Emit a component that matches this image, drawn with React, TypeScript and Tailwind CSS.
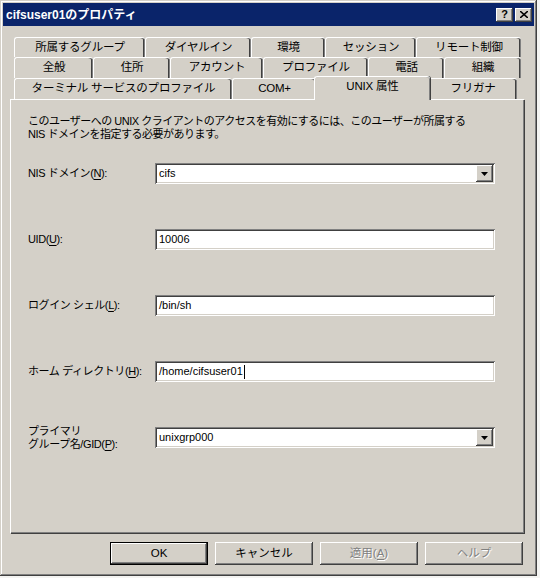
import type { ReactNode } from 'react';

const raised =
  'shadow-[inset_-1px_-1px_#404040,inset_1px_1px_#ffffff,inset_-2px_-2px_#808080,inset_2px_2px_#d4d0c8]';
const sunken =
  'shadow-[inset_1px_1px_#808080,inset_-1px_-1px_#ffffff,inset_2px_2px_#404040,inset_-2px_-2px_#d4d0c8]';

type Tab = { label: string; w: string; selected?: boolean };

const rows: Tab[][] = [
  [
    { label: '所属するグループ', w: 'w-[131px]' },
    { label: 'ダイヤルイン', w: 'w-[106px]' },
    { label: '環境', w: 'w-[74px]' },
    { label: 'セッション', w: 'w-[91px]' },
    { label: 'リモート制御', w: 'w-[105px]' },
  ],
  [
    { label: '全般', w: 'w-[79px]' },
    { label: '住所', w: 'w-[77px]' },
    { label: 'アカウント', w: 'w-[93px]' },
    { label: 'プロファイル', w: 'w-[105px]' },
    { label: '電話', w: 'w-[76px]' },
    { label: '組織', w: 'w-[77px]' },
  ],
  [
    { label: 'ターミナル サービスのプロファイル', w: 'w-[218px]' },
    { label: 'COM+', w: 'w-[84px]' },
    { label: 'UNIX 属性', w: 'w-[116px]', selected: true },
    { label: 'フリガナ', w: 'w-[89px]' },
  ],
];

function TabItem({ tab }: { tab: Tab }) {
  if (tab.selected) {
    return (
      <div
        className={`${tab.w} relative z-10 -mx-[2px] -mt-[2px] -mb-[1px] h-[24px] shrink-0 rounded-t-[3px] border-l border-t border-white bg-[#d4d0c8] shadow-[inset_-1px_0_#808080,1px_0_#404040] flex items-center justify-center pb-[3px]`}
      >
        {tab.label}
      </div>
    );
  }
  return (
    <div
      className={`${tab.w} h-full shrink-0 rounded-t-[3px] border-l border-t border-white bg-[#d4d0c8] shadow-[inset_-1px_0_#808080,inset_-2px_0_#404040] flex items-center justify-center`}
    >
      {tab.label}
    </div>
  );
}

function Key({ children }: { children: ReactNode }) {
  return <span className="underline underline-offset-[2px]">{children}</span>;
}

function Combo({ value }: { value: string }) {
  return (
    <div className={`w-[340px] h-[21px] bg-white ${sunken} flex items-center pl-[4px] pr-[2px]`}>
      <span className="flex-1">{value}</span>
      <div className={`w-[17px] h-[17px] bg-[#d4d0c8] ${raised} flex items-center justify-center`}>
        <svg width="7" height="4" viewBox="0 0 7 4">
          <path d="M0 0h7L3.5 4z" fill="#000" />
        </svg>
      </div>
    </div>
  );
}

function TextBox({ value, caret }: { value: string; caret?: boolean }) {
  return (
    <div className={`w-[340px] h-[21px] bg-white ${sunken} flex items-center pl-[4px]`}>
      <span>{value}</span>
      {caret && <span className="ml-px w-px h-[14px] bg-black" />}
    </div>
  );
}

function Row({ label, children }: { label: ReactNode; children: ReactNode }) {
  return (
    <div className="flex items-center h-[21px]">
      <div className="w-[127px] leading-[13px] whitespace-nowrap tracking-[-0.4px]">{label}</div>
      {children}
    </div>
  );
}

function DlgButton({ children, disabled, def }: { children: ReactNode; disabled?: boolean; def?: boolean }) {
  return (
    <button
      type="button"
      className={`w-[98px] h-[23px] bg-[#d4d0c8] ${
        def
          ? 'shadow-[inset_1px_1px_#000,inset_-1px_-1px_#000,inset_-2px_-2px_#404040,inset_2px_2px_#ffffff,inset_-3px_-3px_#808080]'
          : raised
      } ${disabled ? 'text-[#808080] [text-shadow:1px_1px_#ffffff]' : 'text-black'}`}
    >
      {children}
    </button>
  );
}

export default function App() {
  return (
    <div className="w-[540px] h-[578px] bg-[#f4f4f2] font-['Liberation_Sans','Noto_Sans_CJK_JP',sans-serif] text-[11px] text-black">
      <div
        className={`w-[537px] h-[576px] bg-[#d4d0c8] p-[3px] flex flex-col shadow-[inset_-1px_-1px_#404040,inset_1px_1px_#d4d0c8,inset_-2px_-2px_#808080,inset_2px_2px_#ffffff]`}
      >
        <div className="h-[23px] bg-[#0a246a] flex items-center justify-between pl-[3px] pr-[2px]">
          <span className="text-white font-bold text-[12px]">cifsuser01のプロパティ</span>
          <div className="flex gap-[2px]">
            <div className={`w-[17px] h-[14px] bg-[#d4d0c8] ${raised} flex items-center justify-center text-[11px] font-bold leading-none`}>
              ?
            </div>
            <div className={`w-[17px] h-[14px] bg-[#d4d0c8] ${raised} flex items-center justify-center`}>
              <svg width="8" height="7" viewBox="0 0 8 7">
                <path d="M0 0L8 7M8 0L0 7" stroke="#000" strokeWidth="1.6" />
              </svg>
            </div>
          </div>
        </div>

        <div className="ml-[7px] mr-[10px] mt-[11px] flex flex-col">
          <div className="ml-[4px] mr-[2px] flex flex-col text-[11.5px] tracking-[-0.2px]">
            {rows.map((row, i) => (
              <div key={i} className={`flex ${i === 0 ? 'h-[20px]' : 'h-[21px]'}`}>
                {row.map((t) => (
                  <TabItem key={t.label} tab={t} />
                ))}
              </div>
            ))}
          </div>

          <div className="h-[434px] border-l border-t border-white shadow-[inset_-1px_-1px_#808080,1px_1px_#404040] pl-[17px] pt-[15px] flex flex-col">
            <p className="leading-[13px] text-[11px] tracking-[-0.5px]">
              このユーザーへの UNIX クライアントのアクセスを有効にするには、このユーザーが所属する
              <br />
              NIS ドメインを指定する必要があります。
            </p>
            <div className="mt-[22px] flex flex-col gap-[45px]">
              <Row
                label={
                  <>
                    NIS ドメイン(<Key>N</Key>):
                  </>
                }
              >
                <Combo value="cifs" />
              </Row>
              <Row
                label={
                  <>
                    UID(<Key>U</Key>):
                  </>
                }
              >
                <TextBox value="10006" />
              </Row>
              <Row
                label={
                  <>
                    ログイン シェル(<Key>L</Key>):
                  </>
                }
              >
                <TextBox value="/bin/sh" />
              </Row>
              <Row
                label={
                  <>
                    ホーム ディレクトリ(<Key>H</Key>):
                  </>
                }
              >
                <TextBox value="/home/cifsuser01" caret />
              </Row>
              <Row
                label={
                  <>
                    プライマリ
                    <br />
                    グループ名/GID(<Key>P</Key>):
                  </>
                }
              >
                <Combo value="unixgrp000" />
              </Row>
            </div>
          </div>

          <div className="mt-[9px] flex justify-end gap-[7px] mr-[1px] text-[11.5px]">
            <DlgButton def>OK</DlgButton>
            <DlgButton>キャンセル</DlgButton>
            <DlgButton disabled>
              適用(<Key>A</Key>)
            </DlgButton>
            <DlgButton disabled>ヘルプ</DlgButton>
          </div>
        </div>
      </div>
    </div>
  );
}
